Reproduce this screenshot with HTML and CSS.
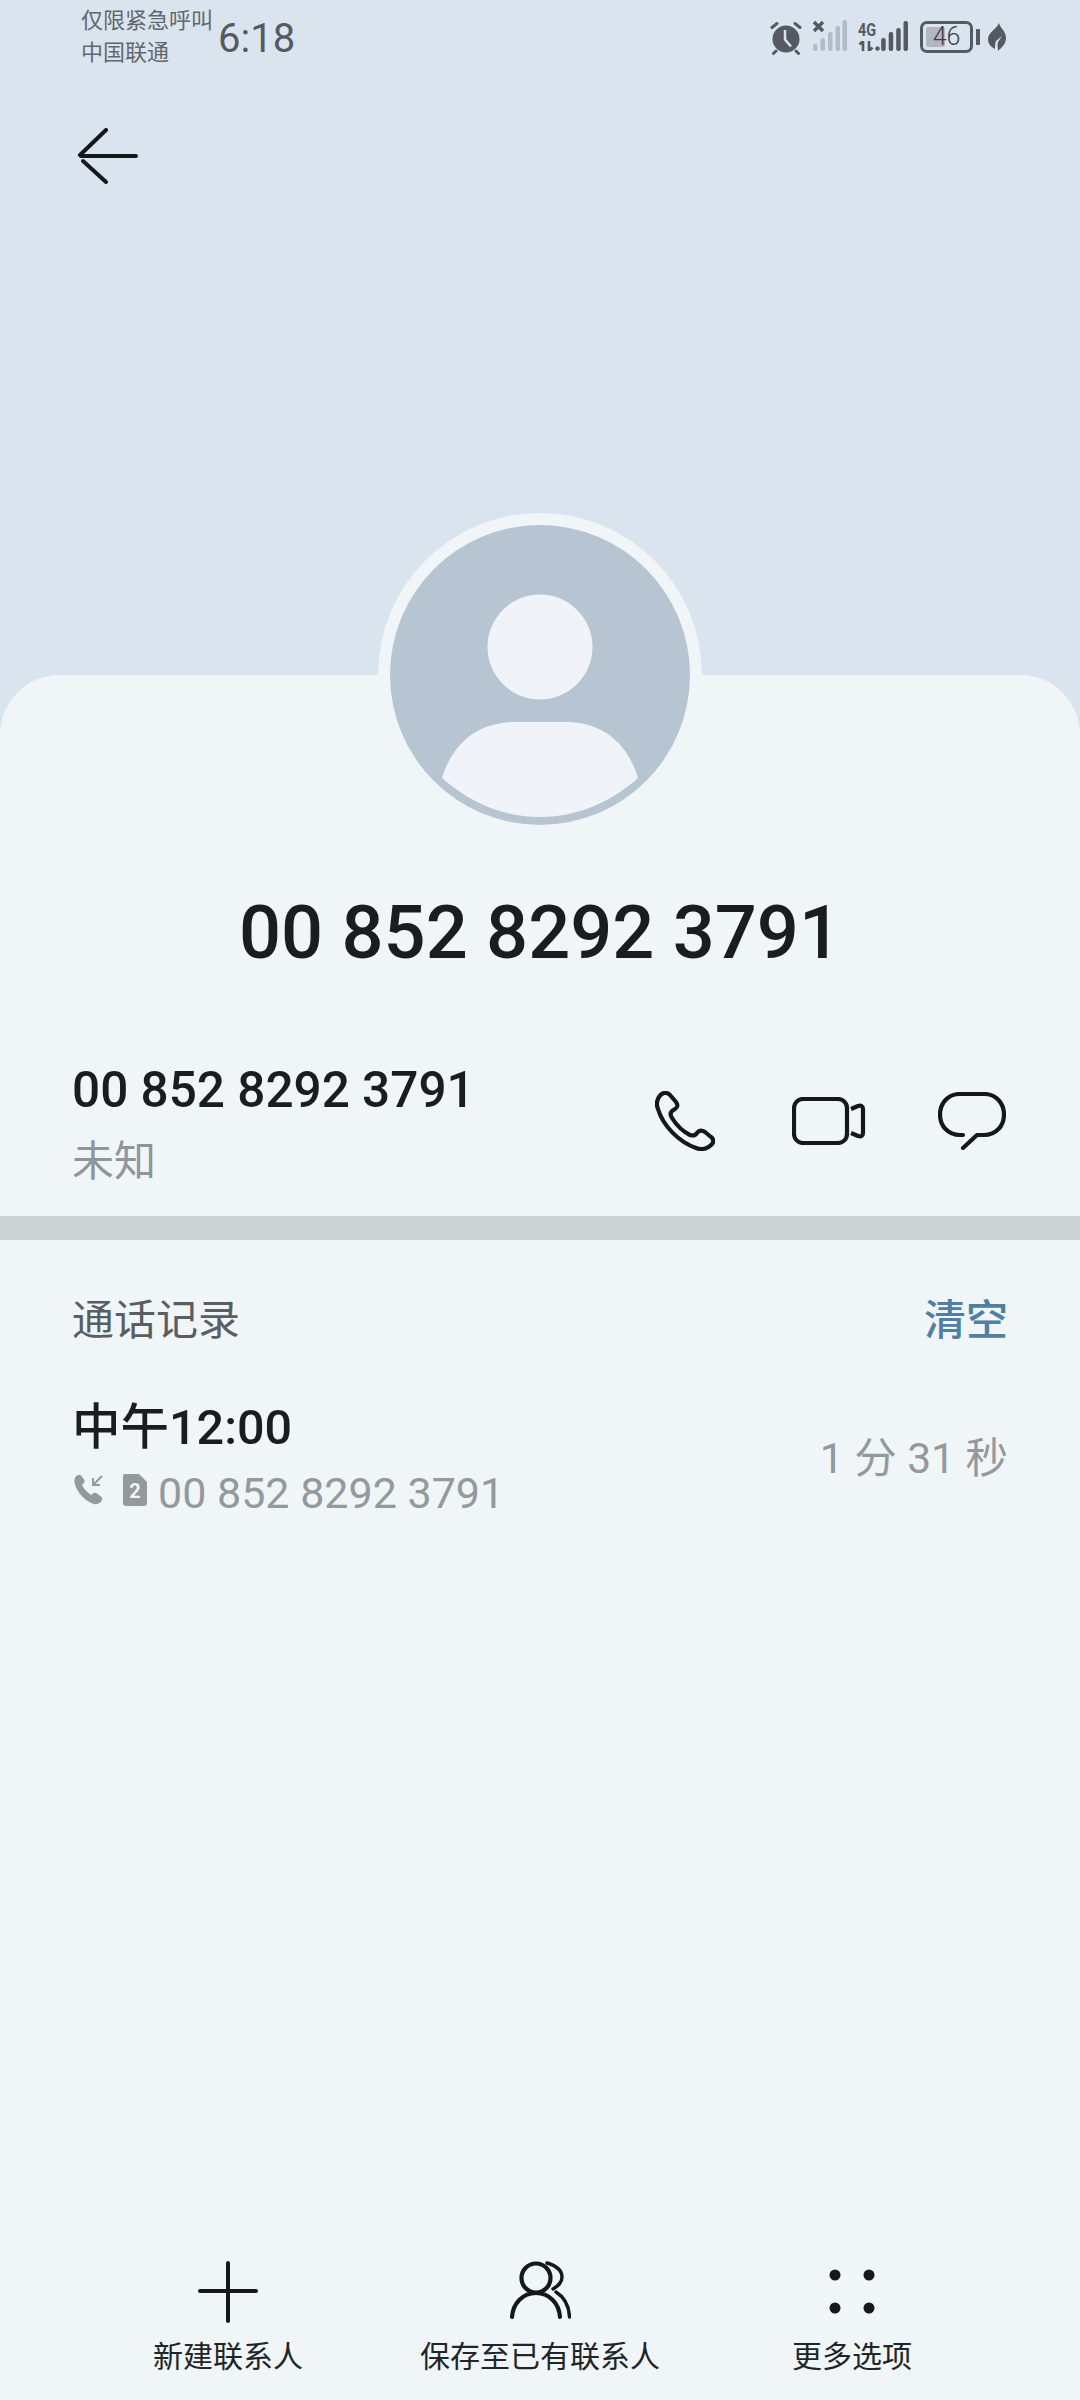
FILE: index.html
```html
<!DOCTYPE html>
<html lang="zh-CN">
<head>
    <meta charset="UTF-8">
    <meta name="viewport" content="width=device-width, initial-scale=1.0">
    <title>通话详情</title>
    <link rel="stylesheet" href="styles.css">
</head>
<body>
    <div class="page">
        <header class="top">
            <div class="status">
                <div class="carrier">
                    <span>仅限紧急呼叫</span>
                    <span>中国联通</span>
                </div>
                <span class="time">6:18</span>
                <div class="status-icons">
                    <!-- alarm -->
                    <svg class="ic-alarm" width="34" height="34" viewBox="0 0 34 34">
                        <circle cx="17" cy="18" r="13.5" fill="#555a62"/>
                        <path d="M3 6.500 8 2.500M31 6.500 26 2.500M7 30l-2.500 2.500M27 30l2.500 2.500" stroke="#555a62" stroke-width="3" stroke-linecap="round"/>
                        <path d="M16 9v9.500l6 7" fill="none" stroke="#dae4ee" stroke-width="2.500"/>
                    </svg>
                    <!-- sim 1, no service -->
                    <svg class="ic-sig" width="36" height="34" viewBox="0 0 36 34">
                        <path d="M2 2l9 9M11 2l-9 9" stroke="#555a62" stroke-width="3.400"/>
                        <g fill="#b3bcc6">
                            <rect x="1" y="24" width="4.500" height="7" rx="2"/>
                            <rect x="8.500" y="18" width="4.500" height="13" rx="2"/>
                            <rect x="16" y="12" width="4.500" height="19" rx="2"/>
                            <rect x="23.500" y="6" width="4.500" height="25" rx="2"/>
                            <rect x="30.500" y="0" width="4.500" height="31" rx="2"/>
                        </g>
                    </svg>
                    <!-- sim 2, 4G -->
                    <div class="net">
                        <span class="net-label">4G</span>
                        <svg width="22" height="10" viewBox="0 0 22 10">
                            <path d="M5 10V0L1.500 3.500M11 0v10l3.500-3.500" fill="none" stroke="#555a62" stroke-width="2.600"/>
                            <circle cx="19.500" cy="7.500" r="2.200" fill="#555a62"/>
                        </svg>
                    </div>
                    <svg class="ic-bars" width="28" height="32" viewBox="0 0 28 32">
                        <g fill="#555a62">
                            <rect x="1.200" y="18" width="4.500" height="13" rx="2"/>
                            <rect x="8.700" y="12" width="4.500" height="19" rx="2"/>
                            <rect x="16.200" y="8" width="4.500" height="23" rx="2"/>
                            <rect x="23.500" y="1" width="4.500" height="30" rx="2"/>
                        </g>
                    </svg>
                    <div class="battery">
                        <div class="battery-body">
                            <div class="battery-fill" style="width: 46%"></div>
                            <span class="battery-num">46</span>
                        </div>
                        <div class="battery-nub"></div>
                    </div>
                    <!-- power saving leaf -->
                    <svg class="ic-leaf" width="18" height="28" viewBox="0 0 18 28">
                        <path d="M11 0C12 5 18 8 18 15c0 6-4 9-8 13 0-3-1-5 0-9l4-6-6 5c-1 3-1 5-1 8C3 24 0 21 0 16 0 9 9 6 11 0Z" fill="#555a62"/>
                    </svg>
                </div>
            </div>
            <svg class="back" width="62" height="56" viewBox="0 0 62 56">
                <path d="M3 27 29 2M4 28h55M6 33 29 54" fill="none" stroke="#15181b" stroke-width="4" stroke-linecap="round"/>
            </svg>
        </header>

        <main class="card">
            <div class="avatar">
                <svg width="300" height="300" viewBox="0 0 300 300">
                    <circle cx="150" cy="150" r="150" fill="#b7c5d3"/>
                    <circle cx="150" cy="122" r="52.500" fill="#f0f4f8"/>
                    <path d="M52 253C66 208 98 197 125 197h50c27 0 59 11 73 56-27 24-61 39-98 39s-71-15-98-39Z" fill="#f0f4f8"/>
                </svg>
            </div>

            <h1 class="title">00 852 8292 3791</h1>

            <section class="contact">
                <div class="contact-info">
                    <div class="contact-num">00 852 8292 3791</div>
                    <div class="contact-sub">未知</div>
                </div>
                <div class="contact-actions">
                    <svg width="60" height="60" viewBox="0 0 60 60">
                        <path d="M4 6C7 1 12 1 15 4l6 7c2 3 2 5-1 7l-3 2c-2 2-2 4 0 7 5 8 12 14 18 17 3 1 5 1 7-2 2-3 5-3 8-1l6 5c3 2 3 6 0 8-4 4-9 5-15 3C24 51 8 35 3 18 1 13 2 9 4 6Z" fill="none" stroke="#15181b" stroke-width="4.200" stroke-linejoin="round"/>
                    </svg>
                    <svg class="act-video" width="74" height="48" viewBox="0 0 74 48">
                        <rect x="2" y="2" width="53" height="44" rx="9" fill="none" stroke="#15181b" stroke-width="4.200"/>
                        <path d="M59 12l7-3c3-1 5 0 5 3v24c0 3-2 4-5 3l-7-3" fill="none" stroke="#15181b" stroke-width="4.200"/>
                    </svg>
                    <svg class="act-msg" width="68" height="58" viewBox="0 0 68 58">
                        <path d="M25 43H22C10 43 2 34 2 22.500S10 2 22 2h24c12 0 20 9 20 20.500S58 43 46 43h-7L25 56" fill="none" stroke="#15181b" stroke-width="4.200" stroke-linecap="round" stroke-linejoin="round"/>
                    </svg>
                </div>
            </section>

            <div class="divider"></div>

            <section class="log">
                <div class="log-head">
                    <span class="log-title">通话记录</span>
                    <span class="log-clear">清空</span>
                </div>
                <div class="log-row">
                    <div>
                        <div class="log-time">中午12:00</div>
                        <div class="log-detail">
                            <svg width="32" height="32" viewBox="0 0 32 32">
                                <path d="M3 1.500c1.500-1 3-1 4 0l3 4c1 1.500.5 3-.5 4l-1.500 1.500c2 4 5 7.500 9.500 10l1.500-1.500c1-1 2.500-1 4 0l4 3c1.500 1 1.500 3 .5 4.500C26 29 23 31 20 30 10 27 2 17 .5 8 0 6 1 3 3 1.500Z" fill="#93999d"/>
                                <path d="M28 2 19 11M19 4v7h7" fill="none" stroke="#93999d" stroke-width="2"/>
                            </svg>
                            <svg class="sim" width="24" height="32" viewBox="0 0 24 32">
                                <path d="M2 0h14l8 8v21a3 3 0 0 1-3 3H3a3 3 0 0 1-3-3V2a2 2 0 0 1 2-2Z" fill="#93999d"/>
                                <text x="12" y="24" text-anchor="middle" class="sim-num">2</text>
                            </svg>
                            <span>00 852 8292 3791</span>
                        </div>
                    </div>
                    <span class="log-len">1 分 31 秒</span>
                </div>
            </section>

            <nav class="bottom">
                <div class="bottom-item">
                    <svg width="60" height="62" viewBox="0 0 60 62">
                        <path d="M30 2v58M2 30h26M32 30h26" fill="none" stroke="#15181b" stroke-width="4" stroke-linecap="round"/>
                    </svg>
                    <span>新建联系人</span>
                </div>
                <div class="bottom-item">
                    <svg width="62" height="62" viewBox="0 0 62 62">
                        <g fill="none" stroke="#15181b" stroke-linecap="round">
                            <circle cx="27" cy="17" r="14.500" stroke-width="4.200"/>
                            <path d="M3 56C4 42 14 32 27 32S50 42 51 56" stroke-width="4.200"/>
                            <path d="M38 2C48 5 53 10 53 16S49 25 44 28M47 31C55 36 60 45 60.500 56" stroke-width="3.400"/>
                        </g>
                    </svg>
                    <span>保存至已有联系人</span>
                </div>
                <div class="bottom-item">
                    <svg width="60" height="62" viewBox="0 0 60 62">
                        <circle cx="13" cy="14" r="5.500" fill="#15181b"/>
                        <circle cx="47" cy="14" r="5.500" fill="#15181b"/>
                        <circle cx="13" cy="47" r="5.500" fill="#15181b"/>
                        <circle cx="47" cy="47" r="5.500" fill="#15181b"/>
                    </svg>
                    <span>更多选项</span>
                </div>
            </nav>
        </main>
    </div>
</body>
</html>
```

FILE: styles.css
```css
* {
    box-sizing: border-box;
}

html, body {
    margin: 0;
    padding: 0;
}

body {
    font-family: Roboto, "Noto Sans CJK SC", sans-serif;
    background-color: #dae4ee;
    color: #1a1c1e;
}

.page {
    width: 1080px;
    height: 2400px;
    display: flex;
    flex-direction: column;
    overflow: hidden;
}

/* header */
.top {
    height: 675px;
    flex: none;
}

.status {
    display: flex;
    height: 74px;
    padding: 5px 74px 0 81px;
    color: #555a62;
}

.carrier {
    display: flex;
    flex-direction: column;
    font-size: 22px;
    line-height: 32px;
    opacity: 0.9;
}

.time {
    font-size: 40px;
    line-height: 68px;
    margin-left: 5px;
}

.status-icons {
    display: flex;
    align-items: flex-start;
    margin-left: auto;
    padding-top: 15px;
}

.ic-alarm {
    margin-top: 1px;
}

.ic-sig {
    margin-left: 9px;
}

.net {
    display: flex;
    flex-direction: column;
    margin-left: 10px;
    width: 22px;
}

.net-label {
    font-size: 18px;
    font-weight: 700;
    line-height: 20px;
    margin-bottom: 1px;
    transform: scaleX(0.8);
    transform-origin: left;
}

.ic-bars {
    flex: none;
}

.battery {
    display: flex;
    align-items: center;
    margin-left: 12px;
    margin-top: 1px;
}

.battery-body {
    position: relative;
    width: 53px;
    height: 32px;
    border: 3px solid #555a62;
    border-radius: 7px;
    padding: 3px;
}

.battery-fill {
    height: 100%;
    background-color: #b0b7bf;
    border-radius: 2px;
}

.battery-num {
    position: absolute;
    left: 0;
    right: 0;
    top: 0;
    text-align: center;
    font-size: 25px;
    font-weight: 300;
    line-height: 26px;
    color: #3c4048;
}

.battery-nub {
    width: 4px;
    height: 16px;
    margin-left: 3px;
    background-color: #555a62;
    border-radius: 1px;
}

.ic-leaf {
    margin-left: 8px;
    margin-top: 3px;
}

.back {
    display: block;
    margin: 54px 0 0 77px;
}

/* card */
.card {
    flex: 1;
    display: flex;
    flex-direction: column;
    background-color: #f0f5f8;
    border-radius: 60px 60px 0 0;
}

.avatar {
    align-self: center;
    width: 324px;
    height: 324px;
    margin-top: -162px;
    padding: 12px;
    background-color: #f0f5f8;
    border-radius: 50%;
}

.avatar svg {
    display: block;
}

.title {
    margin: 49px 0 0;
    font-size: 74px;
    font-weight: 500;
    line-height: 94px;
    text-align: center;
}

.contact {
    display: flex;
    justify-content: space-between;
    height: 158px;
    margin-top: 78px;
    padding: 0 74px 0 72px;
}

.contact-num {
    font-size: 49.500px;
    font-weight: 500;
    line-height: 60px;
    margin-top: 2px;
}

.contact-sub {
    font-size: 42px;
    line-height: 56px;
    margin-top: 14px;
    color: #8f9598;
}

.contact-actions {
    display: flex;
    align-items: center;
    height: 125px;
}

.act-video {
    margin-left: 77px;
}

.act-msg {
    margin-left: 72px;
}

.divider {
    height: 24px;
    flex: none;
    background-color: #cdd2d5;
}

.log {
    padding: 51px 72px 0;
}

.log-head {
    display: flex;
    justify-content: space-between;
    align-items: center;
    line-height: 60px;
}

.log-title {
    font-size: 42px;
    color: #5a5e62;
}

.log-clear {
    font-size: 42px;
    font-weight: 500;
    color: #4f7fa3;
}

.log-row {
    display: flex;
    justify-content: space-between;
    align-items: center;
    margin-top: 47px;
}

.log-time {
    font-size: 48.500px;
    font-weight: 500;
    line-height: 60px;
}

.log-detail {
    display: flex;
    align-items: center;
    font-size: 43px;
    line-height: 60px;
    color: #93999d;
    margin-top: 5px;
    padding-left: 2px;
}

.log-detail svg {
    margin-bottom: 6px;
}

.sim {
    margin-left: 17px;
    margin-right: 11px;
}

.sim-num {
    font-family: Roboto, sans-serif;
    font-size: 20px;
    font-weight: 700;
    fill: #f0f5f8;
}

.log-len {
    font-size: 42.500px;
    color: #93999d;
    margin-bottom: 12px;
}

/* bottom actions */
.bottom {
    display: flex;
    margin-top: auto;
    padding: 0 72px 21px;
}

.bottom-item {
    flex: 1;
    display: flex;
    flex-direction: column;
    align-items: center;
    font-size: 30px;
    line-height: 44px;
    color: #222528;
}

.bottom-item svg {
    display: block;
    margin-bottom: 12px;
}
```
